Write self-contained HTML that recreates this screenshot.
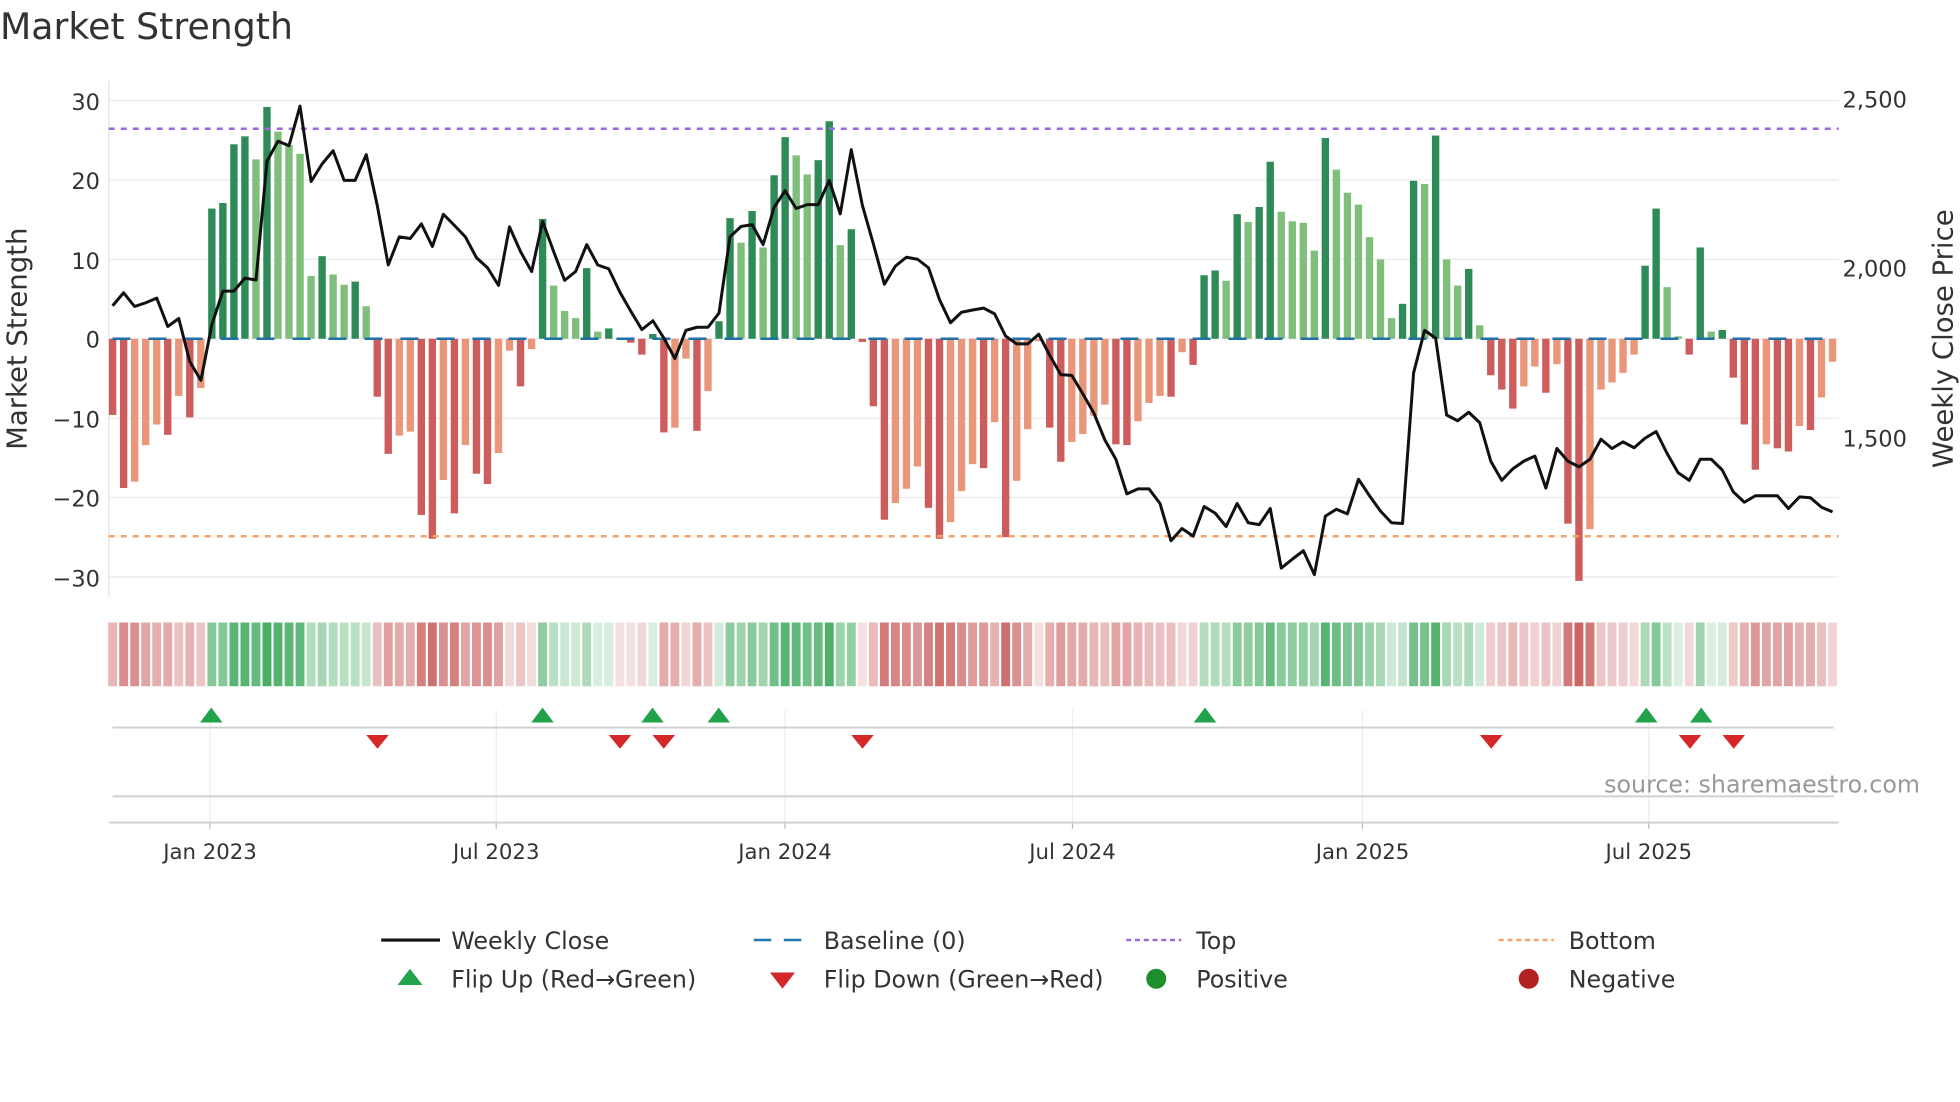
<!DOCTYPE html>
<html><head><meta charset="utf-8"><style>
html,body{margin:0;padding:0;background:#fff;}
svg{display:block;font-family:"DejaVu Sans","Liberation Sans",sans-serif;}
</style></head><body>
<svg id="s" width="1960" height="1102" viewBox="0 0 1568 881.6" xmlns="http://www.w3.org/2000/svg">
<rect width="1568" height="882" fill="#fff"/>
<text x="0" y="31" font-size="29" fill="#333">Market Strength</text>
<g id="grid" stroke="#ebebf0" stroke-width="1"></g>
<line x1="87" y1="65" x2="87" y2="478" stroke="#e4e4e4"/>
<g font-size="18" fill="#333" text-anchor="end">
<text x="80" y="88">30</text><text x="80" y="151">20</text><text x="80" y="215">10</text><text x="80" y="278">0</text>
<text x="80" y="342">−10</text><text x="80" y="405">−20</text><text x="80" y="469">−30</text>
</g>
<g font-size="18" fill="#333">
<text x="1474" y="86">2,500</text><text x="1474" y="221">2,000</text><text x="1474" y="357">1,500</text>
</g>
<text transform="translate(21,271) rotate(-90)" font-size="22" fill="#333" text-anchor="middle">Market Strength</text>
<text transform="translate(1562,271) rotate(-90)" font-size="22" fill="#333" text-anchor="middle">Weekly Close Price</text>
<g id="bars"></g>
<line x1="87" y1="103" x2="1471" y2="103" stroke="#9b6bd8" stroke-width="2" stroke-dasharray="4.8 4.8"/>
<line x1="87" y1="429" x2="1471" y2="429" stroke="#f4a56a" stroke-width="2" stroke-dasharray="4.8 4.8"/>
<line x1="90" y1="271" x2="1471" y2="271" stroke="#1f6fa8" stroke-width="2" stroke-dasharray="14.4 14.4"/>
<polyline id="price" fill="none" stroke="#111" stroke-width="2.4" stroke-linejoin="round"/>
<g id="strip"></g>
<g id="vgrid" stroke="#ececec"></g>
<line x1="90" y1="582" x2="1467" y2="582" stroke="#cfcfcf" stroke-width="1.5"/>
<line x1="90" y1="637" x2="1467" y2="637" stroke="#cfcfcf" stroke-width="1.5"/>
<line x1="87" y1="658" x2="1471" y2="658" stroke="#cfcfcf" stroke-width="1.5"/>
<g id="marks"></g>
<text x="1536" y="634" font-size="19" fill="#999" text-anchor="end">source: sharemaestro.com</text>
<g font-size="17" fill="#333" text-anchor="middle">
<text x="168" y="687">Jan 2023</text><text x="397" y="687">Jul 2023</text><text x="628" y="687">Jan 2024</text>
<text x="858" y="687">Jul 2024</text><text x="1090" y="687">Jan 2025</text><text x="1319" y="687">Jul 2025</text>
</g>
<g font-size="19" fill="#333">
<line x1="305" y1="752" x2="352" y2="752" stroke="#111" stroke-width="2.5"/>
<text x="361" y="759">Weekly Close</text>
<line x1="603" y1="752" x2="648" y2="752" stroke="#1f77b4" stroke-width="2" stroke-dasharray="14 10"/>
<text x="659" y="759">Baseline (0)</text>
<line x1="901" y1="752" x2="945" y2="752" stroke="#9b6bd8" stroke-width="2" stroke-dasharray="4 3"/>
<text x="957" y="759">Top</text>
<line x1="1199" y1="752" x2="1243" y2="752" stroke="#f4a56a" stroke-width="2" stroke-dasharray="4 3"/>
<text x="1255" y="759">Bottom</text>
<polygon points="318,788 338,788 328,775" fill="#22a34a"/>
<text x="361" y="790">Flip Up (Red→Green)</text>
<polygon points="616,778 636,778 626,791" fill="#d62728"/>
<text x="659" y="790">Flip Down (Green→Red)</text>
<circle cx="925" cy="783" r="8" fill="#1f8f2e"/>
<text x="957" y="790">Positive</text>
<circle cx="1223" cy="783" r="8" fill="#b22222"/>
<text x="1255" y="790">Negative</text>
</g>
</svg>
<script>
var NS="http://www.w3.org/2000/svg";
function el(t,a,p){var e=document.createElementNS(NS,t);for(var k in a)e.setAttribute(k,a[k]);document.getElementById(p).appendChild(e);return e;}
[30,20,10,0,-10,-20,-30].forEach(function(v){var y=271-v*6.35;el("line",{x1:87,y1:y,x2:1471,y2:y},"grid");});
[168,397,628,858,1090,1319].forEach(function(x){el("line",{x1:x,y1:568,x2:x,y2:658},"vgrid");el("line",{x1:x,y1:658,x2:x,y2:663,stroke:"#bbb"},"vgrid");});
var V=[[-9.6,1],[-18.8,1],[-18,0],[-13.4,0],[-10.8,0],[-12.1,1],[-7.2,0],[-9.9,1],[-6.2,0],[16.4,1],[17.1,1],[24.5,1],[25.5,1],[22.6,0],[29.2,1],[26.1,0],[24.4,0],[23.3,0],[7.9,0],[10.4,1],[8.1,0],[6.8,0],[7.2,1],[4.1,0],
[-7.3,1],[-14.5,1],[-12.2,0],[-11.7,0],[-22.2,1],[-25.2,1],[-17.8,0],[-22,1],[-13.4,0],[-17,1],[-18.3,1],[-14.4,0],[-1.5,0],[-6,1],[-1.3,0],[15.1,1],
[6.7,0],[3.5,0],[2.6,0],[8.9,1],[0.9,0],[1.3,1],[-0.1,0],[-0.5,1],[-2,1],[0.6,1],[-11.8,1],[-11.2,0],[-2.5,0],[-11.6,1],[-6.6,0],[2.2,1],[15.2,1],[12.1,0],[16.1,1],[11.5,0],[20.6,1],[25.4,1],[23.1,0],[20.7,0],[22.5,1],[27.4,1],[11.8,0],[13.8,1],
[-0.4,1],[-8.5,1],[-22.8,1],[-20.7,0],[-18.9,0],[-16.1,0],[-21.3,1],[-25.2,1],[-23.1,0],[-19.2,0],[-15.8,0],[-16.3,1],
[-10.5,0],[-25,1],[-17.9,0],[-11.4,0],[-0.3,0],[-11.2,1],[-15.5,1],[-13,0],[-12,0],[-9.7,0],[-8.3,0],[-13.3,1],[-13.4,1],[-10.4,0],[-8.1,0],[-7.2,0],[-7.3,1],[-1.7,0],[-3.3,1],
[8,1],[8.6,1],[7.3,0],[15.7,1],[14.7,0],[16.6,1],[22.3,1],[16,0],[14.8,0],[14.6,0],[11.1,0],[25.3,1],[21.3,0],[18.4,0],[16.9,0],[12.8,0],[10,0],[2.6,0],[4.4,1],[19.9,1],[19.5,0],
[25.6,1],[10,0],[6.7,0],[8.8,1],[1.7,0],[-4.6,1],[-6.4,1],[-8.8,1],[-6,0],[-3.5,0],[-6.8,1],[-3.2,0],[-23.3,1],[-30.5,1],[-24,0],[-6.4,0],[-5.5,0],[-4.3,0],[-2,0],
[9.2,1],[16.4,1],[6.5,0],[0.3,0],[-2,1],[11.5,1],[0.9,0],[1.1,1],[-4.9,1],[-10.8,1],[-16.5,1],[-13.3,0],[-13.8,1],[-14.2,1],[-11,0],[-11.5,1],[-7.4,0],[-2.9,0]];
var P=[561,527,563,553,541,615,594,706,755,610,523,523,489,494,185,133,145,42,238,192,158,235,235,168,300,455,382,386,348,407,323,352,382,436,462,508,356,420,472,342,
420,495,472,402,455,465,525,575,623,600,645,698,625,617,617,580,382,355,350,402,305,262,308,298,298,235,322,155,300,400,505,458,435,440,462,545,605,578,572,567,
582,640,660,660,635,690,740,742,790,840,910,960,1050,1037,1037,1075,1172,1140,1160,1083,1100,1135,1075,1125,1130,1088,1243,1220,1198,1260,1108,1090,1102,1012,1055,1095,1125,1127,735,625,
645,845,860,838,865,965,1015,985,965,952,1035,932,965,980,960,908,932,915,930,905,888,945,995,1015,960,960,988,1045,1072,1055,1055,1055,1088,1058,1060,1085,1097];
var x0=90.1,st=8.82,w=5.9,pts=[];
for(var i=0;i<V.length;i++){
 var x=x0+i*st,v=V[i][0],d=V[i][1],y=271-v*6.35;
 var c=v>=0?(d?"#2e8b57":"#7fbf7b"):(d?"#cd5c5c":"#e9967a");
 el("rect",{x:x-w/2,y:Math.min(y,271),width:w,height:Math.max(Math.abs(y-271),0.8),fill:c},"bars");
 var a=0.18+0.75*Math.min(Math.abs(v)/28,1);
 var sc=v>=0?"rgba(60,168,90,"+a.toFixed(2)+")":"rgba(200,88,88,"+a.toFixed(2)+")";
 el("rect",{x:x-w/2-0.6,y:498,width:w+1.2,height:51,fill:sc},"strip");
 if(i<P.length)pts.push(x.toFixed(1)+","+(72+P[i]/3.25).toFixed(1));
}
document.getElementById("price").setAttribute("points",pts.join(" "));
[169,434,522,575,964,1317,1361].forEach(function(x){el("polygon",{points:(x-9)+",578 "+(x+9)+",578 "+x+",566",fill:"#22a34a"},"marks");});
[302,496,531,690,1193,1352,1387].forEach(function(x){el("polygon",{points:(x-9)+",588 "+(x+9)+",588 "+x+",599",fill:"#d62728"},"marks");});
</script>
</body></html>
